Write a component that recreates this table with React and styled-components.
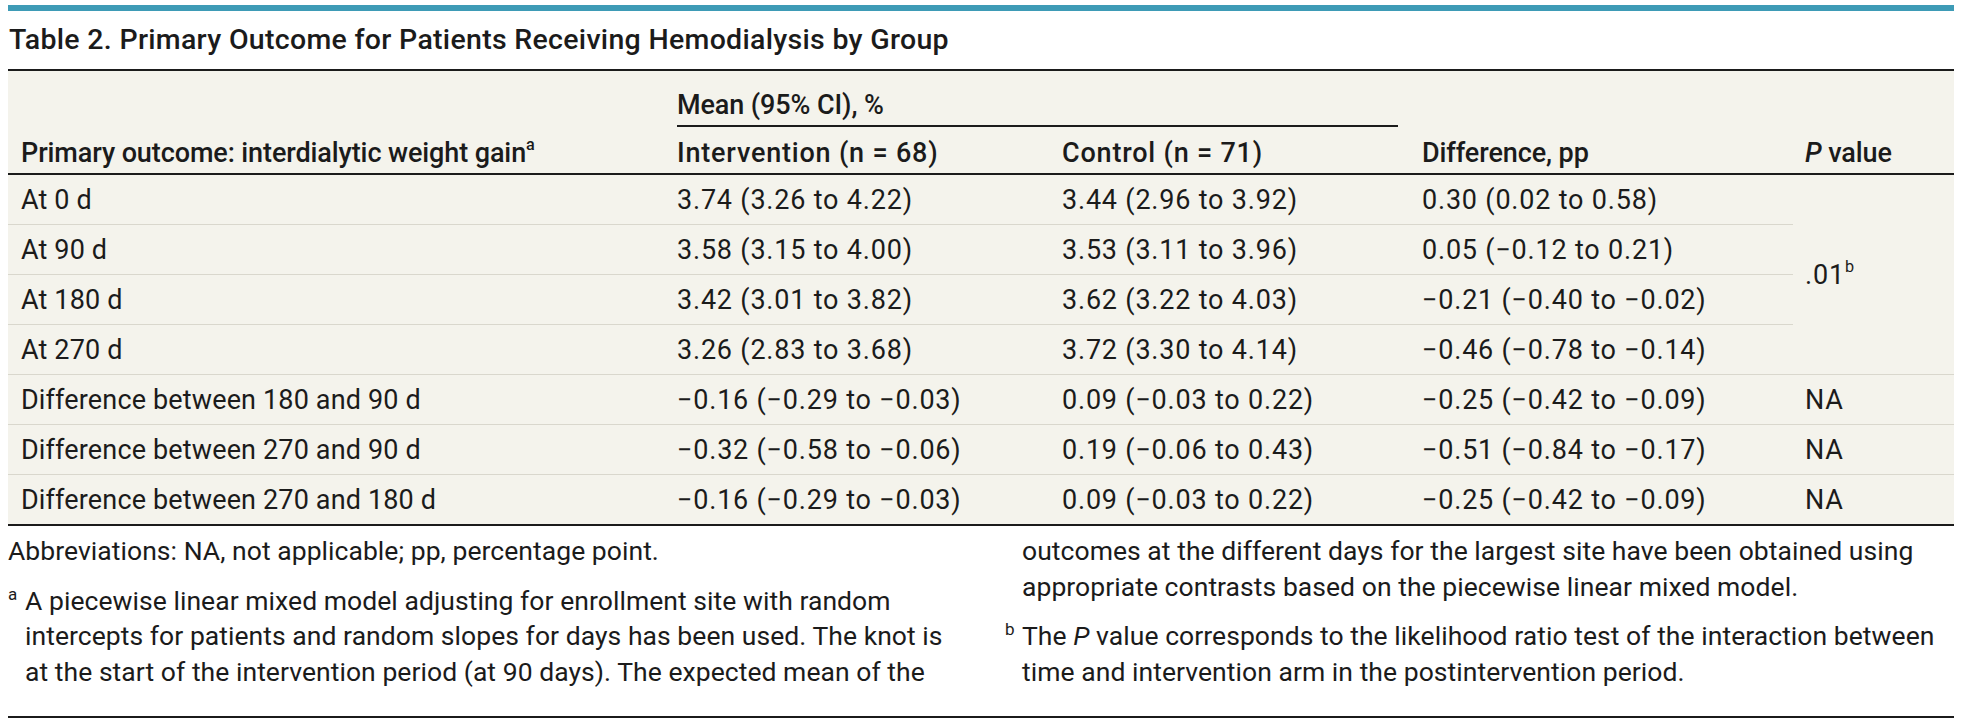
import React from 'react';
import styled, { createGlobalStyle } from 'styled-components';

const GlobalStyle = createGlobalStyle`
  body {
    margin: 0;
    background: #ffffff;
    font-family: Roboto, "Liberation Sans", Arial, sans-serif;
    color: #1b1b1b;
  }
`;

const Page = styled.div`
  padding: 5px 9px 0 8px;
`;

const TopBar = styled.div`
  height: 6px;
  background-color: #3e9bb6;
`;

const Title = styled.h1`
  margin: 0;
  padding: 12px 0 12px 1px;
  font-size: 28.5px;
  line-height: 34px;
  font-weight: 500;
  letter-spacing: 0.3px;
`;

const Table = styled.table`
  width: 100%;
  table-layout: fixed;
  border-collapse: separate;
  border-spacing: 0;
  background-color: #f4f3ec;
  border-top: 2px solid #1b1b1b;
  font-size: 27px;
`;

const HeadCell = styled.th`
  text-align: left;
  font-weight: 500;
  vertical-align: bottom;
  line-height: 30px;
  letter-spacing: ${(p) => (p.$num ? '0.8px' : '-0.1px')};
  padding: 0 12px ${(p) => (p.$group ? '0' : '5px')} ${(p) => (p.$first ? '13px' : '12px')};
  height: ${(p) => (p.$group ? '56px' : 'auto')};
  border-bottom: ${(p) => (p.$group ? 'none' : '2px solid #1b1b1b')};
`;

const GroupLabel = styled.div`
  padding-bottom: 5px;
  border-bottom: 2px solid #1b1b1b;
`;

const SubHeadRow = styled.tr`
  height: 48px;
`;

const Cell = styled.td`
  vertical-align: middle;
  line-height: 30px;
  height: 49px;
  padding: 0 12px 0 ${(p) => (p.$first ? '13px' : '12px')};
  letter-spacing: ${(p) => (p.$num ? '0.8px' : '0.15px')};
  border-bottom: ${(p) => (p.$last ? '2px solid #1b1b1b' : '1px solid #d9d7cd')};
  white-space: nowrap;
`;

const Sup = styled.sup`
  font-size: 0.6em;
  line-height: 0;
  vertical-align: 0.75em;
  letter-spacing: 0;
`;

const Footnotes = styled.div`
  display: grid;
  grid-template-columns: 1fr 1fr;
  column-gap: 48px;
  padding: 7px 0 27px;
  border-bottom: 2px solid #1b1b1b;
  font-size: 26.5px;
  line-height: 35.5px;
  letter-spacing: 0.05px;
`;

const NoteColumn = styled.div`
  display: flex;
  flex-direction: column;
  gap: 14px;
`;

const Note = styled.p`
  margin: 0;
  white-space: nowrap;
  padding-left: ${(p) => (p.$hang ? '17px' : '0')};
`;

const Marker = styled.span`
  display: inline-block;
  width: 17px;
  margin-left: -17px;
  font-size: 17px;
  line-height: 0;
  vertical-align: 10px;
`;

const rows = [
  ['At 0 d', '3.74 (3.26 to 4.22)', '3.44 (2.96 to 3.92)', '0.30 (0.02 to 0.58)'],
  ['At 90 d', '3.58 (3.15 to 4.00)', '3.53 (3.11 to 3.96)', '0.05 (−0.12 to 0.21)'],
  ['At 180 d', '3.42 (3.01 to 3.82)', '3.62 (3.22 to 4.03)', '−0.21 (−0.40 to −0.02)'],
  ['At 270 d', '3.26 (2.83 to 3.68)', '3.72 (3.30 to 4.14)', '−0.46 (−0.78 to −0.14)'],
  ['Difference between 180 and 90 d', '−0.16 (−0.29 to −0.03)', '0.09 (−0.03 to 0.22)', '−0.25 (−0.42 to −0.09)', 'NA'],
  ['Difference between 270 and 90 d', '−0.32 (−0.58 to −0.06)', '0.19 (−0.06 to 0.43)', '−0.51 (−0.84 to −0.17)', 'NA'],
  ['Difference between 270 and 180 d', '−0.16 (−0.29 to −0.03)', '0.09 (−0.03 to 0.22)', '−0.25 (−0.42 to −0.09)', 'NA'],
];

const App = () => {
  return (
    <Page>
      <GlobalStyle />
      <TopBar />
      <Title>Table 2. Primary Outcome for Patients Receiving Hemodialysis by Group</Title>
      <Table>
        <colgroup>
          <col style={{ width: 657 }} />
          <col style={{ width: 385 }} />
          <col style={{ width: 360 }} />
          <col style={{ width: 383 }} />
          <col style={{ width: 161 }} />
        </colgroup>
        <thead>
          <tr>
            <HeadCell rowSpan={2} $first>
              Primary outcome: interdialytic weight gain<Sup>a</Sup>
            </HeadCell>
            <HeadCell colSpan={2} $group>
              <GroupLabel>Mean (95% CI), %</GroupLabel>
            </HeadCell>
            <HeadCell rowSpan={2}>Difference, pp</HeadCell>
            <HeadCell rowSpan={2}>
              <i>P</i> value
            </HeadCell>
          </tr>
          <SubHeadRow>
            <HeadCell $num>Intervention (n = 68)</HeadCell>
            <HeadCell $num>Control (n = 71)</HeadCell>
          </SubHeadRow>
        </thead>
        <tbody>
          {rows.map((r, i) => {
            const last = i === rows.length - 1;
            return (
              <tr key={r[0]}>
                <Cell $first $last={last}>{r[0]}</Cell>
                <Cell $num $last={last}>{r[1]}</Cell>
                <Cell $num $last={last}>{r[2]}</Cell>
                <Cell $num $last={last}>{r[3]}</Cell>
                {i === 0 && (
                  <Cell rowSpan={4} $num>
                    .01<Sup>b</Sup>
                  </Cell>
                )}
                {r[4] && <Cell $num $last={last}>{r[4]}</Cell>}
              </tr>
            );
          })}
        </tbody>
      </Table>
      <Footnotes>
        <NoteColumn>
          <Note>Abbreviations: NA, not applicable; pp, percentage point.</Note>
          <Note $hang>
            <Marker>a</Marker>A piecewise linear mixed model adjusting for enrollment site with random
            <br />
            intercepts for patients and random slopes for days has been used. The knot is
            <br />
            at the start of the intervention period (at 90 days). The expected mean of the
          </Note>
        </NoteColumn>
        <NoteColumn>
          <Note $hang>
            outcomes at the different days for the largest site have been obtained using
            <br />
            appropriate contrasts based on the piecewise linear mixed model.
          </Note>
          <Note $hang>
            <Marker>b</Marker>The <i>P</i> value corresponds to the likelihood ratio test of the interaction between
            <br />
            time and intervention arm in the postintervention period.
          </Note>
        </NoteColumn>
      </Footnotes>
    </Page>
  );
};

export default App;
